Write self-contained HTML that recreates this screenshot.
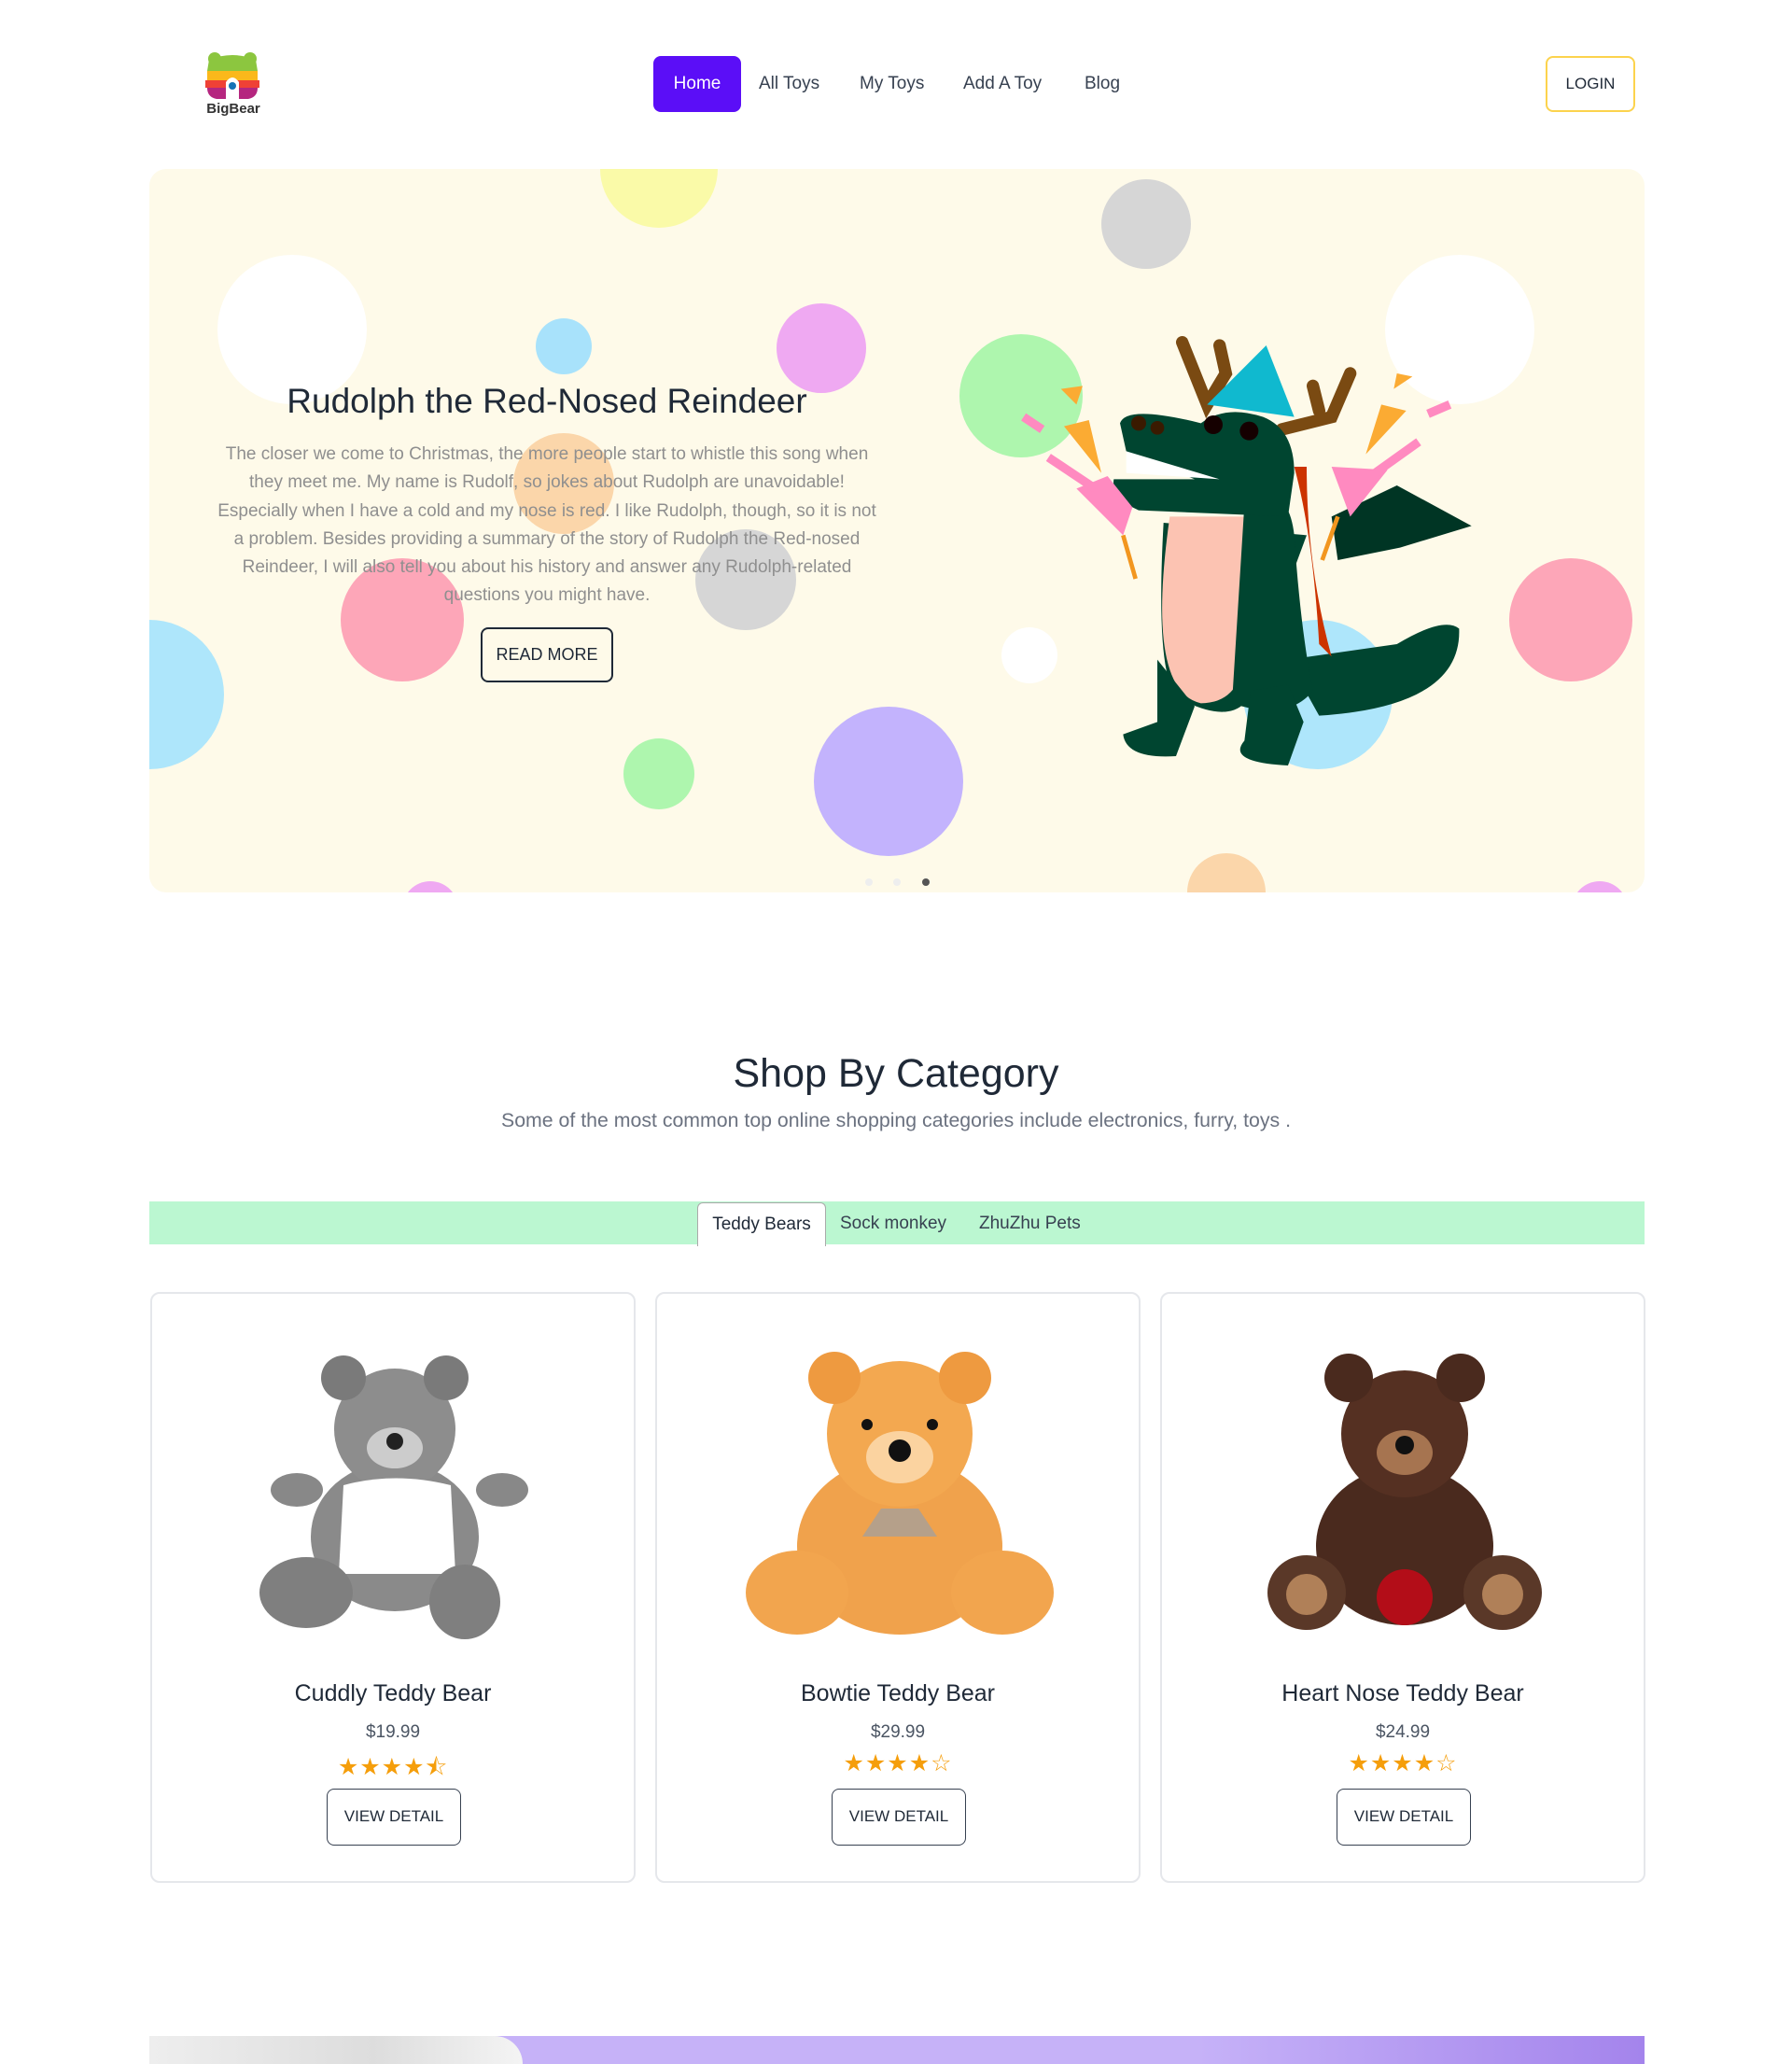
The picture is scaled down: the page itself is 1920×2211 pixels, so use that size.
<!DOCTYPE html>
<html><head><meta charset="utf-8"><style>
*{box-sizing:border-box;margin:0;padding:0}
body{width:1920px;height:2211px;background:#fff;font-family:"Liberation Sans",sans-serif;color:#1f2937;position:relative;overflow:hidden}
.a{position:absolute}
.nav a{position:absolute;top:60px;height:60px;line-height:60px;font-size:19px;color:#374151;text-decoration:none}
.hero{left:160px;top:181px;width:1602px;height:775px;background:#fefae9;border-radius:18px;overflow:hidden}
.c{position:absolute;border-radius:50%}
.card{position:absolute;top:1384px;width:520px;height:633px;border:2px solid #e5e7eb;border-radius:10px;background:#fff;text-align:center}
.card h3{position:absolute;top:414px;width:100%;font-size:25px;font-weight:normal;color:#1f2937}
.card .p{position:absolute;top:459px;width:100%;font-size:19px;color:#4b5563}
.card .s{position:absolute;top:488px;width:100%;font-size:25px;color:#f59e0b;letter-spacing:1px}
.card .b{position:absolute;top:530px;left:187px;width:144px;height:61px;border:1.5px solid #374151;border-radius:8px;line-height:58px;font-size:17px;color:#1f2937}
</style></head><body>
<svg class="a" style="left:216px;top:54px" width="66" height="56" viewBox="0 0 66 56">
<circle cx="14" cy="9" r="7" fill="#8cc63f"/><circle cx="52" cy="9" r="7" fill="#8cc63f"/>
<path d="M8 10 Q33 0 58 10 L60 22 L6 22Z" fill="#8cc63f"/>
<rect x="6" y="22" width="54" height="10" fill="#fbb81b"/>
<rect x="4" y="32" width="58" height="8" fill="#ef4136"/>
<path d="M6 40 H60 Q60 50 50 52 H16 Q6 50 6 40Z" fill="#b5267f"/>
<path d="M26 52 V34 Q33 24 40 34 V52Z" fill="#fff"/>
<circle cx="33" cy="38" r="4" fill="#1573b7"/>
</svg>
<div class="a" style="left:216px;top:108px;width:68px;text-align:center;font-size:15px;font-weight:bold;color:#333">BigBear</div>
<div class="nav">
<a style="left:700px;width:94px;background:#5b0ef7;color:#fff;border-radius:8px;text-align:center">Home</a>
<a style="left:813px">All Toys</a><a style="left:921px">My Toys</a><a style="left:1032px">Add A Toy</a><a style="left:1162px">Blog</a>
</div>
<div class="a" style="left:1656px;top:60px;width:96px;height:60px;border:2px solid #fcd34d;border-radius:8px;text-align:center;line-height:56px;font-size:17px;color:#1f2937">LOGIN</div>

<div class="a hero">
<div class="c" style="left:483px;top:-63px;width:126px;height:126px;background:#fafaa8"></div>
<div class="c" style="left:1020px;top:11px;width:96px;height:96px;background:#d6d6d6"></div>
<div class="c" style="left:73px;top:92px;width:160px;height:160px;background:#fff"></div>
<div class="c" style="left:414px;top:160px;width:60px;height:60px;background:#a8e2fb"></div>
<div class="c" style="left:672px;top:144px;width:96px;height:96px;background:#efa9f2"></div>
<div class="c" style="left:868px;top:177px;width:132px;height:132px;background:#aef6ae"></div>
<div class="c" style="left:1324px;top:92px;width:160px;height:160px;background:#fff"></div>
<div class="c" style="left:390px;top:283px;width:108px;height:108px;background:#fbd6aa"></div>
<div class="c" style="left:585px;top:386px;width:108px;height:108px;background:#d6d6d6"></div>
<div class="c" style="left:205px;top:417px;width:132px;height:132px;background:#fda6b8"></div>
<div class="c" style="left:1457px;top:417px;width:132px;height:132px;background:#fda6b8"></div>
<div class="c" style="left:-80px;top:483px;width:160px;height:160px;background:#aee6fb"></div>
<div class="c" style="left:913px;top:491px;width:60px;height:60px;background:#fff"></div>
<div class="c" style="left:1172px;top:483px;width:160px;height:160px;background:#aee6fb"></div>
<div class="c" style="left:508px;top:610px;width:76px;height:76px;background:#aef6ae"></div>
<div class="c" style="left:712px;top:576px;width:160px;height:160px;background:#c3b3fd"></div>
<div class="c" style="left:1112px;top:733px;width:84px;height:84px;background:#fbd6aa"></div>
<div class="c" style="left:271px;top:763px;width:60px;height:60px;background:#efa9f2"></div>
<div class="c" style="left:1524px;top:763px;width:60px;height:60px;background:#efa9f2"></div>
<div class="a" style="left:40px;top:228px;width:772px;text-align:center;font-size:37px;color:#1f2937">Rudolph the Red-Nosed Reindeer</div>
<div class="a" style="left:66px;top:291px;width:720px;text-align:center;font-size:19px;line-height:30.3px;color:#8f8f8f">The closer we come to Christmas, the more people start to whistle this song when they meet me. My name is Rudolf, so jokes about Rudolph are unavoidable! Especially when I have a cold and my nose is red. I like Rudolph, though, so it is not a problem. Besides providing a summary of the story of Rudolph the Red-nosed Reindeer, I will also tell you about his history and answer any Rudolph-related questions you might have.</div>
<div class="a" style="left:355px;top:491px;width:142px;height:59px;border:2px solid #1f2937;border-radius:8px;text-align:center;line-height:55px;font-size:18px">READ MORE</div>
<div class="c" style="left:767px;top:760px;width:8px;height:8px;background:#eee"></div>
<div class="c" style="left:797px;top:760px;width:8px;height:8px;background:#eee"></div>
<div class="c" style="left:828px;top:760px;width:8px;height:8px;background:#555"></div>
<svg class="a" style="left:920px;top:159px" width="520" height="500" viewBox="0 0 1560 1500">
<path d="M560 80 L640 280 L700 180 L680 90 M1100 180 L1040 320 L880 360 M980 220 L1000 300" stroke="#7a4a12" stroke-width="40" stroke-linecap="round" fill="none"/>
<path d="M640 280 L830 90 L920 320Z" fill="#10b9cf"/>
<path d="M1450 1000 Q1460 1250 1000 1280 L900 1100 L1250 1050 Q1400 960 1450 1000Z" fill="#004530"/>
<path d="M1040 640 L1250 540 L1490 670 L1260 740 L1060 780Z" fill="#003524"/>
<path d="M500 660 Q470 1200 560 1230 Q700 1300 760 1240 L960 700 Z" fill="#004530"/>
<path d="M520 640 Q440 1200 620 1240 Q740 1240 760 1100 L760 640Z" fill="#fcc3b2"/>
<path d="M760 600 Q900 520 920 700 Q940 1000 980 1200 Q900 1300 720 1240Z" fill="#004530"/>
<path d="M920 480 Q980 700 1000 1050 L1040 1090 Q960 800 960 480Z" fill="#cc3300"/>
<path d="M360 340 Q380 280 620 340 Q700 280 820 320 Q920 360 920 500 L900 640 L420 620 Q330 580 340 520 L600 520 L380 430Z" fill="#004530"/>
<path d="M380 430 L680 520 L380 500Z" fill="#fff"/>
<circle cx="660" cy="345" r="30" fill="#150000"/><circle cx="775" cy="365" r="30" fill="#150000"/>
<circle cx="420" cy="340" r="24" fill="#3a1a00"/><circle cx="480" cy="355" r="22" fill="#3a1a00"/>
<path d="M480 1100 L480 1300 L370 1340 Q380 1420 540 1410 L600 1250Z M780 1200 L760 1360 Q700 1430 900 1440 L950 1300 L900 1180Z" fill="#004530"/>
<path d="M220 550 L320 510 L400 610 L370 700 Z" fill="#ff8ac0"/>
<path d="M1040 480 L1220 490 L1100 640 Z" fill="#ff8ac0"/>
<path d="M170 230 L240 220 L220 280Z M180 350 L260 330 L300 500Z M1250 180 L1300 190 L1240 230Z M1200 280 L1280 300 L1150 440Z" fill="#fbab33"/>
<path d="M130 450 L280 550 M1180 500 L1320 400 M50 320 L110 360 M1350 310 L1420 280" stroke="#ff8ac0" stroke-width="28"/>
<path d="M370 700 L410 840 M1060 640 L1010 780" stroke="#f2961f" stroke-width="14"/>
</svg>
</div>

<div class="a" style="left:0;top:1126px;width:1920px;text-align:center;font-size:43px;color:#1f2937">Shop By Category</div>
<div class="a" style="left:0;top:1188px;width:1920px;text-align:center;font-size:21.3px;color:#6b7280">Some of the most common top online shopping categories include electronics, furry, toys .</div>
<div class="a" style="left:160px;top:1287px;width:1602px;height:46px;background:#bbf7d1"></div>
<div class="a" style="left:747px;top:1288px;width:138px;height:47px;background:#fff;border:1px solid #aaa;border-bottom:none;border-radius:6px 6px 0 0;text-align:center;line-height:46px;font-size:19px">Teddy Bears</div>
<div class="a" style="left:900px;top:1288px;line-height:46px;font-size:19px;color:#374151">Sock monkey</div>
<div class="a" style="left:1049px;top:1288px;line-height:46px;font-size:19px;color:#374151">ZhuZhu Pets</div>

<div class="card" style="left:161px">
<svg class="a" style="left:110px;top:50px" width="300" height="320" viewBox="0 0 300 320">
<ellipse cx="150" cy="210" rx="90" ry="80" fill="#8a8a8a"/><circle cx="150" cy="95" r="65" fill="#8d8d8d"/>
<circle cx="95" cy="40" r="24" fill="#7a7a7a"/><circle cx="205" cy="40" r="24" fill="#7a7a7a"/>
<ellipse cx="150" cy="115" rx="30" ry="22" fill="#ccc"/><circle cx="150" cy="108" r="9" fill="#222"/>
<path d="M95 155 Q150 140 210 155 L215 250 L90 250Z" fill="#fff"/>
<ellipse cx="55" cy="270" rx="50" ry="38" fill="#7f7f7f"/><ellipse cx="225" cy="280" rx="38" ry="40" fill="#7f7f7f"/>
<ellipse cx="45" cy="160" rx="28" ry="18" fill="#888"/><ellipse cx="265" cy="160" rx="28" ry="18" fill="#888"/>
</svg>
<h3>Cuddly Teddy Bear</h3><div class="p">$19.99</div><div class="s">★★★★⯪</div><div class="b">VIEW DETAIL</div></div>

<div class="card" style="left:702px">
<svg class="a" style="left:90px;top:50px" width="340" height="320" viewBox="0 0 340 320">
<ellipse cx="170" cy="220" rx="110" ry="95" fill="#f0a24c"/><circle cx="170" cy="100" r="78" fill="#f3a850"/>
<circle cx="100" cy="40" r="28" fill="#ee9a40"/><circle cx="240" cy="40" r="28" fill="#ee9a40"/>
<ellipse cx="170" cy="125" rx="36" ry="28" fill="#fbd3a0"/><circle cx="170" cy="118" r="12" fill="#111"/>
<circle cx="135" cy="90" r="6" fill="#111"/><circle cx="205" cy="90" r="6" fill="#111"/>
<path d="M150 180 L190 180 L210 210 L130 210Z" fill="#b5a08a"/>
<ellipse cx="60" cy="270" rx="55" ry="45" fill="#f2a54e"/><ellipse cx="280" cy="270" rx="55" ry="45" fill="#f2a54e"/>
</svg>
<h3>Bowtie Teddy Bear</h3><div class="p">$29.99</div><div class="s">★★★★☆</div><div class="b">VIEW DETAIL</div></div>

<div class="card" style="left:1243px">
<svg class="a" style="left:110px;top:50px" width="300" height="320" viewBox="0 0 300 320">
<ellipse cx="150" cy="220" rx="95" ry="85" fill="#4a2a1e"/><circle cx="150" cy="100" r="68" fill="#553022"/>
<circle cx="90" cy="40" r="26" fill="#4a2a1e"/><circle cx="210" cy="40" r="26" fill="#4a2a1e"/>
<ellipse cx="150" cy="120" rx="30" ry="24" fill="#a67450"/><circle cx="150" cy="112" r="10" fill="#111"/>
<ellipse cx="45" cy="270" rx="42" ry="40" fill="#5a3828"/><ellipse cx="255" cy="270" rx="42" ry="40" fill="#5a3828"/>
<circle cx="45" cy="272" r="22" fill="#b08058"/><circle cx="255" cy="272" r="22" fill="#b08058"/>
<circle cx="150" cy="275" r="30" fill="#b30d18"/>
</svg>
<h3>Heart Nose Teddy Bear</h3><div class="p">$24.99</div><div class="s">★★★★☆</div><div class="b">VIEW DETAIL</div></div>

<div class="a" style="left:160px;top:2181px;width:1602px;height:30px;background:linear-gradient(90deg,#c6b2f8 70%,#a484ec)"></div>
<div class="a" style="left:160px;top:2181px;width:400px;height:30px;background:linear-gradient(90deg,#eee,#ddd 60%,#f4f4f4);border-radius:0 80px 0 0"></div>
</body></html>
